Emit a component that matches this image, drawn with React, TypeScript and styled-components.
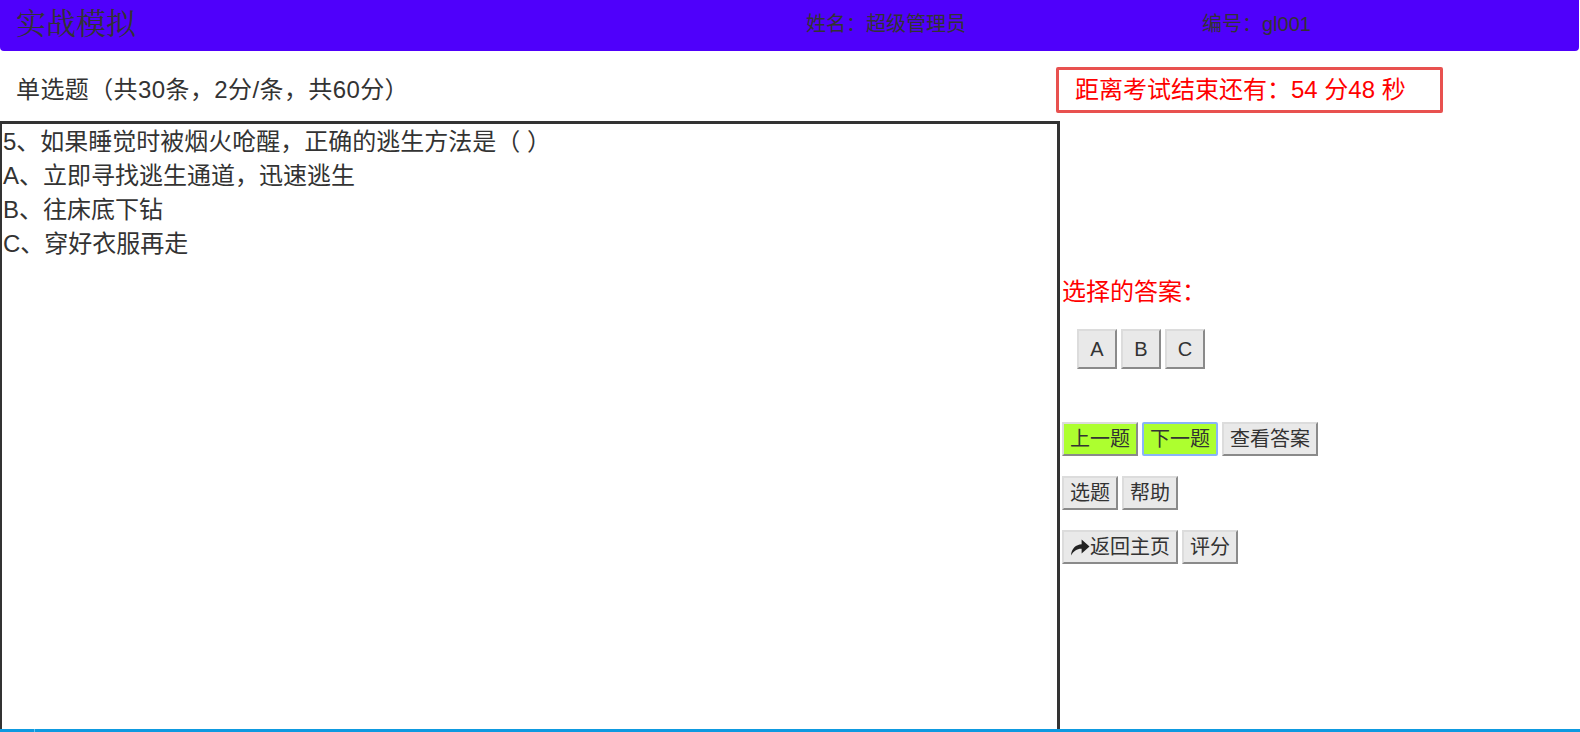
import React from 'react';
import styled, { createGlobalStyle } from 'styled-components';

interface WidthProps {
    width: number;
}
interface ButtonProps {
    green?: boolean;
    focused?: boolean;
}

const GlobalStyle = createGlobalStyle`
body {
  margin:0;
  overflow:hidden;
  font-family:"Liberation Sans", "Noto Sans CJK SC", sans-serif;
  color:#333;
  background:#fff;
}
`;

const Header = styled.div`
height:51px;
background:#4f00fb;
border-radius:0 0 4px 4px;
display:flex;
align-items:flex-start;
padding-left:16px;
box-sizing:border-box;
width:1579px;
`;
const Title = styled.div`
width:790px;
font-family:"Noto Serif CJK SC", "Noto Sans CJK SC", serif;
font-size:30px;
line-height:42px;
color:#333;
`;
const HeaderInfo = styled.div<WidthProps>`
width:${props => props.width}px;
font-size:20px;
line-height:48px;
color:#333;
`;

const TopRow = styled.div`
display:flex;
align-items:center;
padding-top:16px;
margin-bottom:8px;
`;
const Subtitle = styled.div`
width:1056px;
padding-left:16px;
box-sizing:border-box;
font-size:24px;
line-height:34px;
letter-spacing:0.4px;
`;
const Timer = styled.div`
width:387px;
height:46px;
box-sizing:border-box;
border:3px solid #e8514f;
border-radius:2px;
padding-left:16px;
font-size:24px;
line-height:40px;
color:#f00;
`;

const Main = styled.div`
display:flex;
align-items:flex-start;
`;
const QuestionBox = styled.div`
width:1060px;
height:640px;
box-sizing:border-box;
border:3px solid #333;
border-left-width:2px;
padding:1px 0 0 1px;
font-size:24px;
line-height:34px;
`;
const QuestionLine = styled.div`
white-space:nowrap;
`;

const SidePanel = styled.div`
padding:154px 0 0 2px;
display:flex;
flex-direction:column;
`;
const AnswerLabel = styled.div`
color:#f00;
font-size:24px;
line-height:34px;
`;
const AnswerRow = styled.div`
display:flex;
gap:4px;
margin:20px 0 53px 15px;
`;
const ButtonRow = styled.div`
display:flex;
gap:4px;
margin-bottom:20px;
`;

const BaseButton = styled.button`
font-family:"Liberation Sans", "Noto Sans CJK SC", sans-serif;
font-size:20px;
color:#333;
background:#e9e9e9;
border:2px solid;
border-color:#dcdcdc #8a8a8a #8a8a8a #dcdcdc;
margin:0;
cursor:pointer;
box-sizing:border-box;
display:flex;
align-items:center;
justify-content:center;
`;
const OptionButton = styled(BaseButton)`
width:40px;
height:40px;
padding:0;
`;
const ActionButton = styled(BaseButton)<ButtonProps>`
height:34px;
padding:0 6px;
line-height:28px;
background:${props => (props.green ? '#adff2f' : '#e9e9e9')};
${props => props.focused && `
border-color:#8ab4f8;
outline:none;
border-radius:2px;
`}
`;
const ShareIcon = styled.svg`
width:20px;
height:20px;
margin-right:0;
`;

const Footer = styled.div`
position:fixed;
left:0;
right:0;
bottom:0;
height:3px;
background:#0e9ae0;
&::before {
  content:'';
  position:absolute;
  left:34px;
  top:0;
  width:1px;
  height:3px;
  background:#6cc4f0;
}
`;

const question = [
    '5、如果睡觉时被烟火呛醒，正确的逃生方法是（ ）',
    'A、立即寻找逃生通道，迅速逃生',
    'B、往床底下钻',
    'C、穿好衣服再走',
];

export default function App() {
    return (
        <>
            <GlobalStyle />
            <Header>
                <Title>实战模拟</Title>
                <HeaderInfo width={396}>姓名：超级管理员</HeaderInfo>
                <HeaderInfo width={200}>编号：gl001</HeaderInfo>
            </Header>
            <TopRow>
                <Subtitle>单选题（共30条，2分/条，共60分）</Subtitle>
                <Timer>距离考试结束还有：54 分48 秒</Timer>
            </TopRow>
            <Main>
                <QuestionBox>
                    {question.map(line => (
                        <QuestionLine key={line}>{line}</QuestionLine>
                    ))}
                </QuestionBox>
                <SidePanel>
                    <AnswerLabel>选择的答案：</AnswerLabel>
                    <AnswerRow>
                        <OptionButton>A</OptionButton>
                        <OptionButton>B</OptionButton>
                        <OptionButton>C</OptionButton>
                    </AnswerRow>
                    <ButtonRow>
                        <ActionButton green>上一题</ActionButton>
                        <ActionButton green focused>下一题</ActionButton>
                        <ActionButton>查看答案</ActionButton>
                    </ButtonRow>
                    <ButtonRow>
                        <ActionButton>选题</ActionButton>
                        <ActionButton>帮助</ActionButton>
                    </ButtonRow>
                    <ButtonRow>
                        <ActionButton>
                            <ShareIcon viewBox="0 0 16 16">
                                <path d="M0.8 14.8 C1.2 9.2 4.8 6 9.3 5.8 V2 L15.6 7.6 L9.3 13.2 V9.4 C5.6 9.3 2.9 11.2 0.8 14.8 Z" fill="#222" />
                            </ShareIcon>
                            返回主页
                        </ActionButton>
                        <ActionButton>评分</ActionButton>
                    </ButtonRow>
                </SidePanel>
            </Main>
            <Footer />
        </>
    );
}
